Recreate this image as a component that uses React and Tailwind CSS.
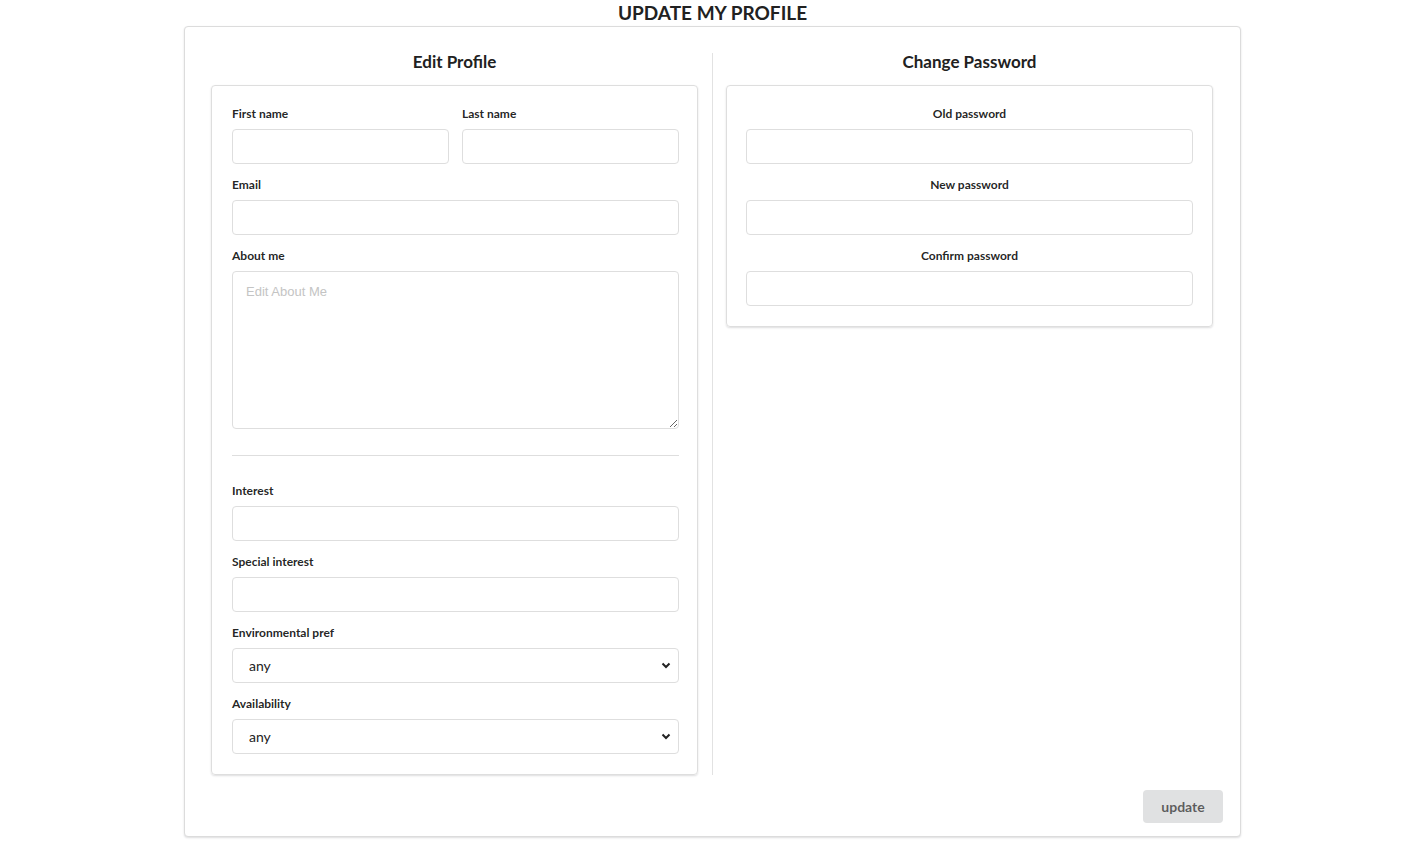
import React from "react";

const labelCls = "block text-[12px] font-bold text-[rgba(0,0,0,0.87)] leading-[18px] mb-[6px]";
const inputCls =
  "block w-full h-[35px] rounded-[4px] border border-[#dedede] bg-white px-[14px] text-[14px] outline-none";

function Field({ label, center, last, children }) {
  return (
    <div className={last ? "" : "mb-[12px]"}>
      <label className={labelCls + (center ? " text-center" : "")}>{label}</label>
      {children}
    </div>
  );
}

function Select() {
  return (
    <div className="relative">
      <select
        className="block w-full h-[35px] rounded-[4px] border border-[#dedede] bg-white pl-[16px] pr-[30px] text-[14px] text-[#222] appearance-none outline-none"
        style={{ fontFamily: "Lato, sans-serif" }}
        defaultValue="any"
      >
        <option value="any">any</option>
      </select>
      <svg
        className="absolute right-[8px] top-[14px] pointer-events-none"
        width="10"
        height="7"
        viewBox="0 0 10 7"
      >
        <path d="M1.5 1.5 L5 5 L8.5 1.5" fill="none" stroke="#222" strokeWidth="2" />
      </svg>
    </div>
  );
}

export default function App() {
  return (
    <div className="min-h-screen bg-white" style={{ fontFamily: "Lato, 'Liberation Sans', sans-serif" }}>
      <div className="w-[1057px] ml-[184px]">
        <h1 className="text-center text-[19px] leading-[26px] font-bold text-[#212121]">UPDATE MY PROFILE</h1>
        <div className="rounded-[4px] border border-[#dcdcdc] shadow-[0_1px_2px_0_rgba(34,36,38,0.15)] bg-white pt-[26px] pb-[13px]">
          <div className="flex px-[26px]">
            <div className="w-[487px]">
              <h2 className="text-center text-[17px] leading-[18px] font-bold text-[#212121] mb-[14px]">Edit Profile</h2>
              <div className="rounded-[4px] border border-[#dedede] shadow-[0_1px_2px_0_rgba(34,36,38,0.15)] pt-[19px] pb-[20px] pl-[20px] pr-[18px]">
                <div className="flex gap-[13px]">
                  <div className="flex-1">
                    <Field label="First name">
                      <input className={inputCls} />
                    </Field>
                  </div>
                  <div className="flex-1">
                    <Field label="Last name">
                      <input className={inputCls} />
                    </Field>
                  </div>
                </div>
                <Field label="Email">
                  <input className={inputCls} />
                </Field>
                <div>
                  <label className={labelCls}>About me</label>
                  <textarea
                    className="block w-full h-[158px] rounded-[4px] border border-[#dedede] bg-white px-[13px] py-[10px] text-[13px] outline-none placeholder:text-[#c4c4c4]"
                    style={{ fontFamily: "'Liberation Sans', Arial, sans-serif" }}
                    placeholder="Edit About Me"
                  />
                </div>
                <div className="mt-[26px] mb-[26px] h-px bg-[#dedede]" />
                <Field label="Interest">
                  <input className={inputCls} />
                </Field>
                <Field label="Special interest">
                  <input className={inputCls} />
                </Field>
                <Field label="Environmental pref">
                  <Select />
                </Field>
                <Field label="Availability" last>
                  <Select />
                </Field>
              </div>
            </div>
            <div className="ml-[14px] mr-[13px] w-px bg-[#e2e2e2]" />
            <div className="w-[487px]">
              <h2 className="text-center text-[17px] leading-[18px] font-bold text-[#212121] mb-[14px]">Change Password</h2>
              <div className="rounded-[4px] border border-[#dedede] shadow-[0_1px_2px_0_rgba(34,36,38,0.15)] pt-[19px] pb-[20px] px-[19px]">
                <Field label="Old password" center>
                  <input type="password" className={inputCls} />
                </Field>
                <Field label="New password" center>
                  <input type="password" className={inputCls} />
                </Field>
                <Field label="Confirm password" center last>
                  <input type="password" className={inputCls} />
                </Field>
              </div>
            </div>
          </div>
          <div className="flex justify-end pr-[17px] mt-[15px]">
            <button className="w-[80px] h-[33px] rounded-[4px] bg-[#e0e1e2] text-[14px] font-bold text-[rgba(0,0,0,0.6)]">
              update
            </button>
          </div>
        </div>
      </div>
    </div>
  );
}
